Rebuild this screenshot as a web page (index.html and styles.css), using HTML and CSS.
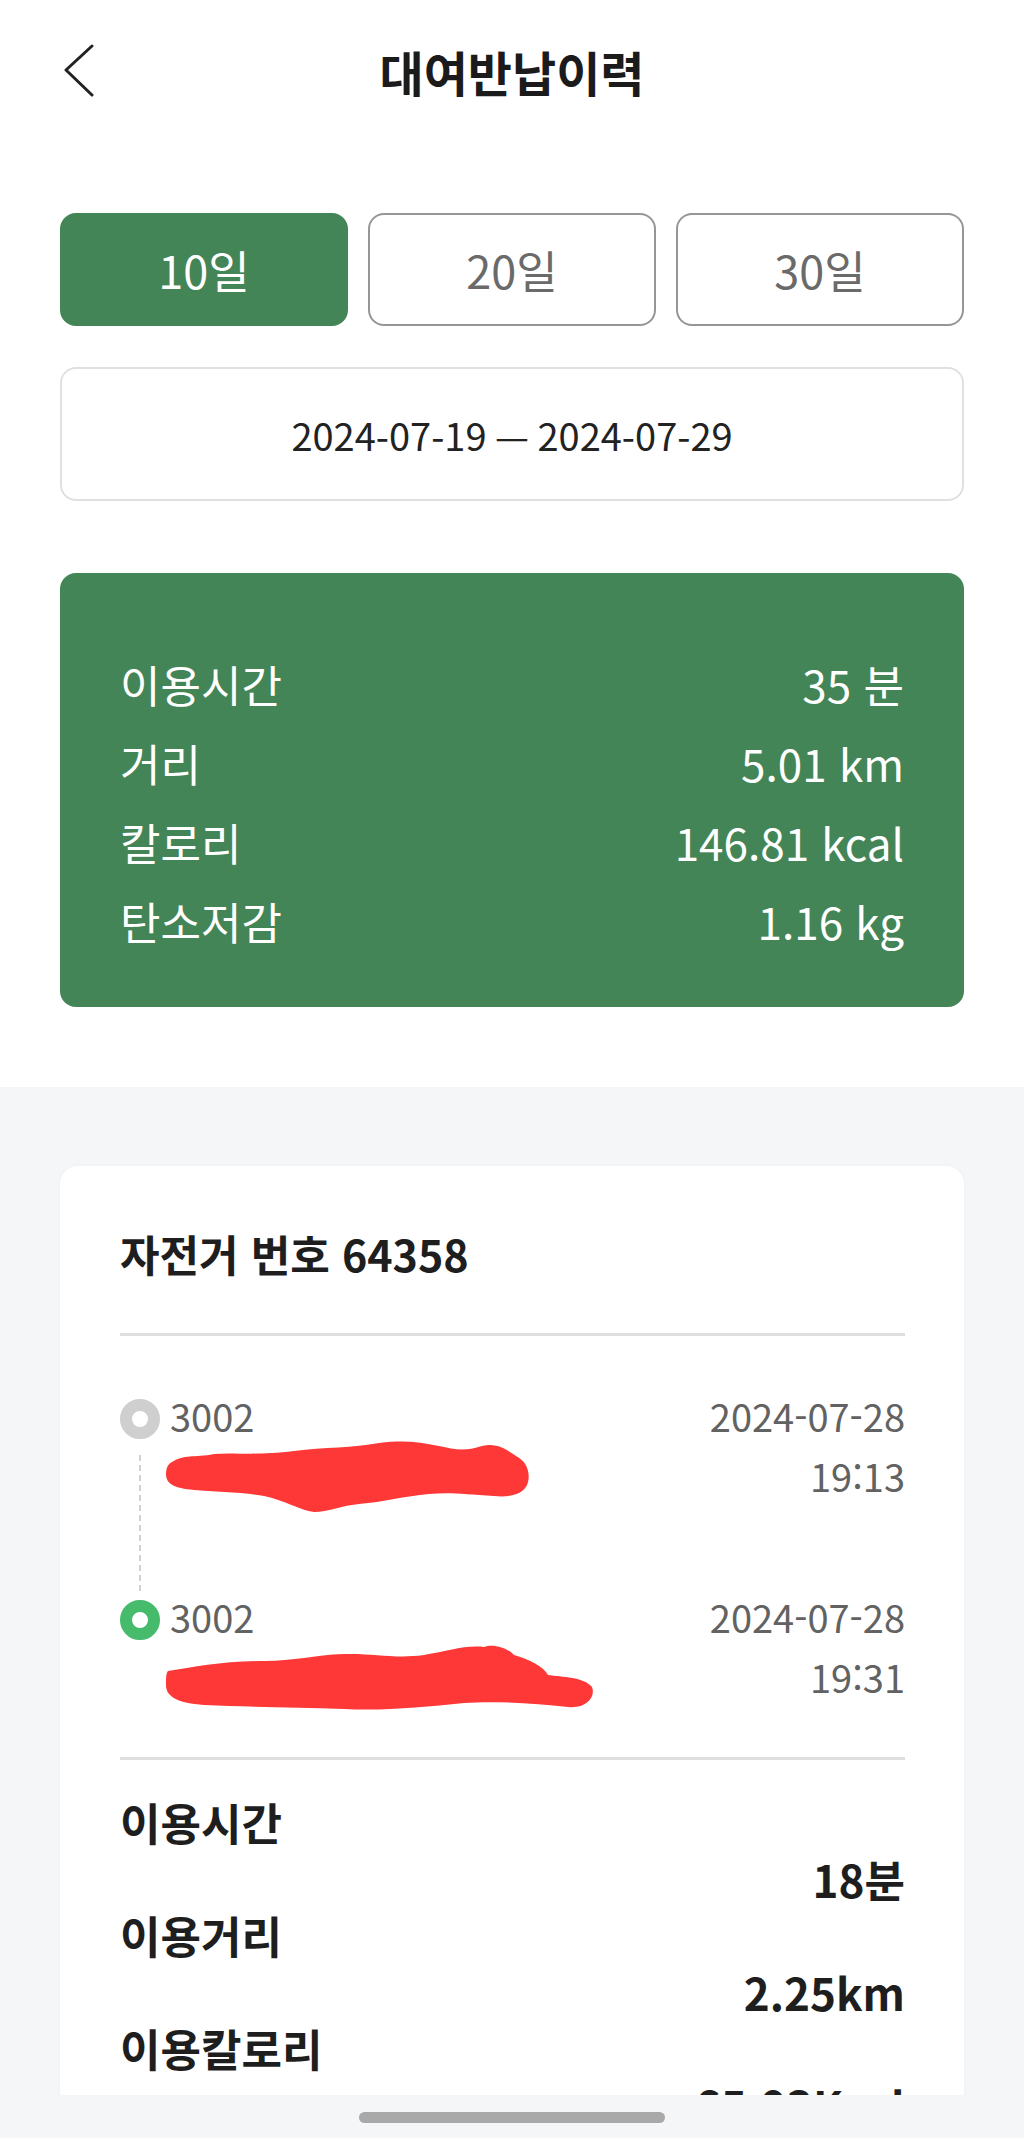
FILE: index.html
```html
<!DOCTYPE html>
<html lang="ko">
<head>
    <meta charset="utf-8">
    <title>대여반납이력</title>
    <link rel="stylesheet" href="styles.css">
</head>
<body>
    <div class="page">
        <!-- top bar -->
        <header class="topbar">
            <button class="back-btn" aria-label="뒤로">
                <svg width="32" height="54" viewBox="0 0 32 54">
                    <path d="M29 2 L3 26 L29 51" fill="none" stroke="#222" stroke-width="3" stroke-linecap="round" stroke-linejoin="round"/>
                </svg>
            </button>
            <h1 class="page-title">대여반납이력</h1>
            <span></span>
        </header>

        <section class="filters">
            <div class="period-tabs">
                <button class="tab active">10일</button>
                <button class="tab">20일</button>
                <button class="tab">30일</button>
            </div>
            <div class="date-range">2024-07-19 — 2024-07-29</div>

            <div class="summary">
                <div class="summary-row"><span>이용시간</span><span>35 분</span></div>
                <div class="summary-row"><span>거리</span><span>5.01 km</span></div>
                <div class="summary-row"><span>칼로리</span><span>146.81 kcal</span></div>
                <div class="summary-row"><span>탄소저감</span><span>1.16 kg</span></div>
            </div>
        </section>

        <section class="history">
            <article class="ride-card">
                <h2 class="bike-no">자전거 번호 64358</h2>
                <hr class="divider">

                <div class="stops">
                    <div class="stop">
                        <span class="dot start"></span>
                        <span class="station">3002</span>
                        <span class="stamp">2024-07-28</span>
                        <span></span>
                        <span class="address">
                            <svg width="366" height="74" viewBox="0 0 366 74">
                                <path d="M8 22 C20 14 30 18 50 14 C70 12 90 16 130 11 C160 7 190 8 215 3 C240 0 255 2 275 6 C290 9 300 12 318 6 C335 2 345 12 352 16 C364 22 366 34 364 42 C362 52 350 58 330 56 C300 54 285 52 265 54 C240 56 220 62 195 64 C175 66 165 72 150 72 C135 70 120 60 100 56 C80 52 50 52 30 50 C10 48 2 44 2 34 C2 28 4 24 8 22 Z" fill="#fe3737"/>
                            </svg>
                        </span>
                        <span class="stamp">19:13</span>
                    </div>
                    <div class="stop">
                        <span class="dot end"></span>
                        <span class="station">3002</span>
                        <span class="stamp">2024-07-28</span>
                        <span></span>
                        <span class="address">
                            <svg width="432" height="72" viewBox="0 0 432 72">
                                <path d="M4 30 C30 26 60 20 100 20 C130 20 150 14 180 13 C210 12 230 18 260 14 C285 10 300 4 320 6 C330 2 345 8 350 14 C365 18 380 26 384 34 C398 36 420 36 428 46 C432 56 422 68 404 66 C370 62 330 60 300 62 C260 66 220 70 180 68 C130 66 80 66 40 64 C14 62 2 56 2 44 C2 38 2 32 4 30 Z" fill="#fe3737"/>
                            </svg>
                        </span>
                        <span class="stamp">19:31</span>
                    </div>
                </div>

                <hr class="divider flat">

                <div class="ride-stats">
                    <div class="stat-label">이용시간</div>
                    <div class="stat-value">18분</div>
                    <div class="stat-label">이용거리</div>
                    <div class="stat-value">2.25km</div>
                    <div class="stat-label">이용칼로리</div>
                    <div class="stat-value">65.93Kcal</div>
                </div>
            </article>
        </section>

        <!-- system gesture bar -->
        <div class="home-bar"><span></span></div>
    </div>
</body>
</html>
```

FILE: styles.css
```css
body {
    margin: 0;
    background: #ffffff;
    font-family: "Noto Sans CJK KR", "Noto Sans", sans-serif;
    color: #222;
}

.page {
    position: relative;
    width: 1024px;
    height: 2138px;
    overflow: hidden;
}

/* top bar */
.topbar {
    display: grid;
    grid-template-columns: 1fr auto 1fr;
    align-items: center;
    height: 142px;
}

.back-btn {
    justify-self: start;
    margin-left: 63px;
    padding: 0;
    border: none;
    background: none;
    display: flex;
}

.page-title {
    margin: 0;
    font-size: 48px;
    font-weight: 700;
    line-height: 60px;
    color: #1b1b1b;
}

/* period filters + summary */
.filters {
    padding: 71px 60px 80px;
}

.period-tabs {
    display: grid;
    grid-template-columns: repeat(3, 1fr);
    gap: 20px;
}

.tab {
    height: 113px;
    border: 2px solid #969696;
    border-radius: 16px;
    background: #fff;
    color: #6a6a6a;
    font-family: inherit;
    font-size: 45px;
    line-height: 1;
}

.tab.active {
    background: #438557;
    border-color: #438557;
    color: #fff;
}

.date-range {
    margin-top: 41px;
    height: 130px;
    border: 2px solid #e0e0e0;
    border-radius: 16px;
    display: flex;
    justify-content: center;
    align-items: center;
    font-size: 38px;
    color: #222;
}

.summary {
    margin-top: 72px;
    padding: 72px 60px 46px;
    background: #438557;
    border-radius: 16px;
    color: #fff;
}

.summary-row {
    display: flex;
    justify-content: space-between;
    font-size: 44px;
    line-height: 79px;
}

/* ride history */
.history {
    background: #f5f6f8;
    padding: 79px 60px 0;
    height: 1100px;
}

.ride-card {
    background: #fff;
    border-radius: 18px;
    padding: 59px 59px 60px 60px;
    box-shadow: 0 0 4px rgba(0, 0, 0, 0.03);
}

.bike-no {
    margin: 0;
    font-size: 43px;
    font-weight: 700;
    line-height: 56px;
    color: #1e1e1e;
}

.divider {
    margin: 52px 0 0;
    border: none;
    border-top: 3px solid #dedede;
}

.divider.flat {
    margin-top: 0;
}

.stops {
    display: flex;
    flex-direction: column;
    gap: 81px;
    padding: 50px 0;
}

.stop {
    display: grid;
    grid-template-columns: 40px 1fr auto;
    grid-template-rows: 60px 60px;
    column-gap: 8px;
    font-size: 38px;
    line-height: 60px;
    color: #626262;
}

.dot {
    position: relative;
    align-self: center;
    width: 16px;
    height: 16px;
    border: 12px solid #cfcfcf;
    border-radius: 50%;
    margin-top: 6px;
}

.dot.end {
    border-color: #45bb6b;
}

/* dashed track between the two stops */
.dot.start::after {
    content: "";
    position: absolute;
    left: 7px;
    top: 44px;
    height: 136px;
    border-left: 2px dashed #d2d2d2;
}

.station {
    margin-left: 2px;
}

.stamp {
    text-align: right;
}

.address {
    display: block;
    height: 60px;
}

.address svg {
    display: block;
    margin: -6px 0 0 -4px;
}

.ride-stats {
    padding-top: 34px;
    font-size: 44px;
    font-weight: 700;
    line-height: 56.5px;
    color: #1e1e1e;
}

.stat-value {
    text-align: right;
}

/* gesture bar overlays the scrolled list */
.home-bar {
    position: absolute;
    left: 0;
    right: 0;
    bottom: 0;
    height: 43px;
    background: #f5f6f8;
    display: flex;
    justify-content: center;
    padding-top: 17px;
    box-sizing: border-box;
}

.home-bar span {
    width: 306px;
    height: 11px;
    border-radius: 6px;
    background: #a9a9a9;
}
```
